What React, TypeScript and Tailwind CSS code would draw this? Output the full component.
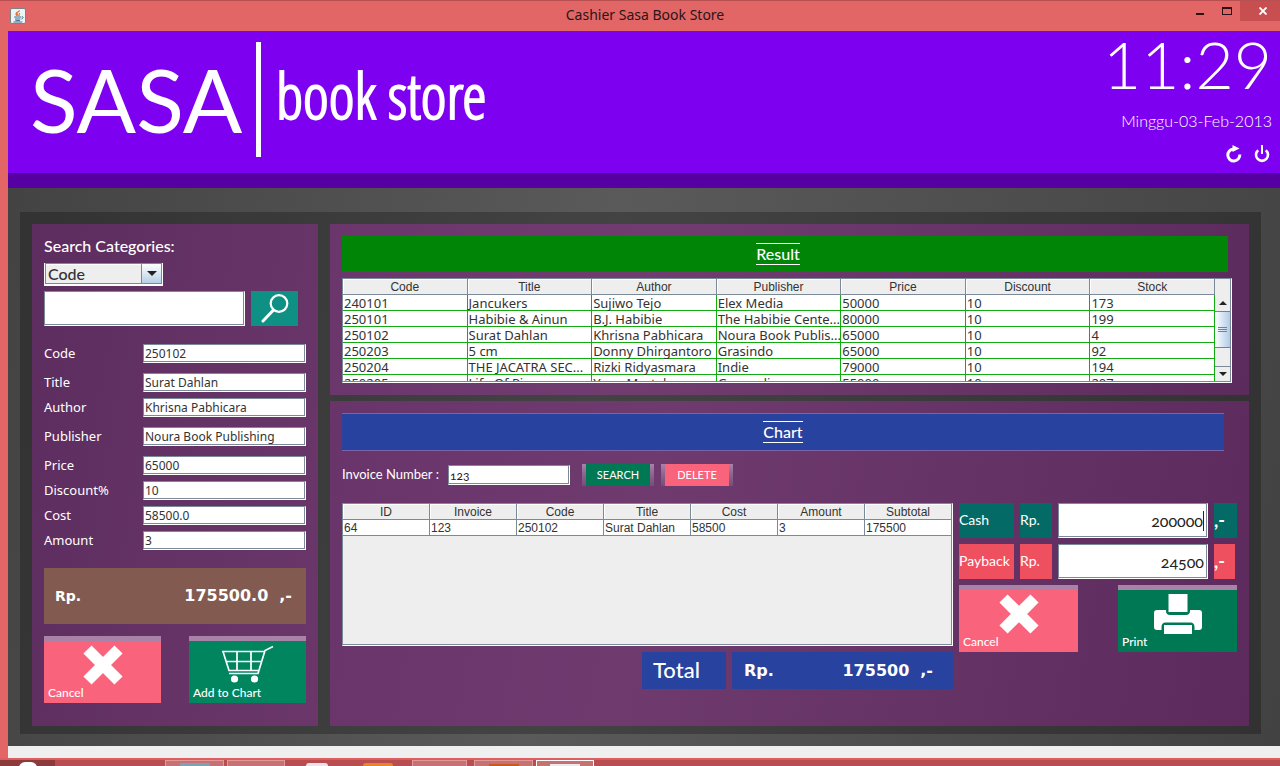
import React from "react";

const metalEdge =
  "border border-t-[#7a8a99] border-l-[#7a8a99] border-r-white border-b-white shadow-[inset_-1px_-1px_0_#7a8a99]";
const lato = "font-['Lato',sans-serif]";
const noto = "font-['Noto_Sans',sans-serif]";
const arial = "font-['Liberation_Sans',Arial,sans-serif]";
const verdana = "font-['DejaVu_Sans',sans-serif]";

function JavaIcon() {
  return (
    <svg width="16" height="16" viewBox="0 0 16 16" aria-hidden="true">
      <rect x="0.5" y="0.5" width="15" height="15" rx="1.5" fill="#eef3f4" stroke="#7b8388" />
      <path d="M9.8 2.5C6.5 4.6 6.6 5.4 8.2 7.8M7 4.2C5.2 6 6 6.8 7 7.8M10 5.2C8.6 6.2 9.3 6.8 9 8" fill="none" stroke="#e8722c" strokeWidth="1.1" />
      <path d="M4.2 9h7.2M5 11h5.4M5.4 12.6h4.6M3.4 14h9M12 8.6c1.8 0 1.4 2-.6 2.4" fill="none" stroke="#3d6c93" strokeWidth="1" />
    </svg>
  );
}

function CrossIcon() {
  return (
    <svg width="40" height="40" viewBox="0 0 40 40" aria-hidden="true">
      <path d="M4.500 4.500L35.500 35.500M35.500 4.500L4.500 35.500" stroke="#fff" strokeWidth="11.500" />
    </svg>
  );
}

function CartIcon() {
  return (
    <svg width="52" height="40" viewBox="0 0 52 40" fill="none" stroke="#fff" aria-hidden="true">
      <path d="M51 1.500L43 5.500L36 28.500H7M43 6.500H1L7 25.500H36.500M4 16.500H40M15 6.500V26M29 6.500V26" strokeWidth="1.700" />
      <circle cx="12.500" cy="34" r="3.600" fill="#fff" stroke="none" />
      <circle cx="32.500" cy="34" r="3.600" fill="#fff" stroke="none" />
    </svg>
  );
}

function PrintIcon() {
  return (
    <svg width="48" height="40" viewBox="0 0 48 40" fill="#fff" aria-hidden="true">
      <path d="M14.500 0H33.500V18H14.500Z" />
      <path d="M3 16H12V17C12 19.500 13.500 21 16 21H32C34.500 21 36 19.500 36 17V16H45C47 16 48 17 48 19V33C48 35 47 36 45 36H40.500V33C40.500 30 39 28.500 36.500 28.500H11.500C9 28.500 7.500 30 7.500 33V36H3C1 36 0 35 0 33V19C0 17 1 16 3 16Z" />
      <path d="M10 31H38V40H10Z" />
    </svg>
  );
}

function SearchIcon() {
  return (
    <svg width="28" height="29" viewBox="0 0 28 29" fill="none" stroke="#fff" aria-hidden="true">
      <circle cx="18" cy="9.500" r="8.300" strokeWidth="2.200" />
      <path d="M12.500 16L2 27" strokeWidth="3" strokeLinecap="round" />
    </svg>
  );
}

function RefreshIcon() {
  return (
    <svg width="16" height="18" viewBox="0 0 16 18" aria-hidden="true">
      <path d="M7.500 4A6 6 0 1 0 13.800 9.500" fill="none" stroke="#fff" strokeWidth="3" />
      <path d="M6.500 0L13.500 3.500L6.500 7Z" fill="#fff" />
    </svg>
  );
}

function PowerIcon() {
  return (
    <svg width="16" height="18" viewBox="0 0 16 18" fill="none" stroke="#fff" aria-hidden="true">
      <path d="M4.200 5.200A6 6 0 1 0 11.800 5.200" strokeWidth="2.600" />
      <path d="M8 0V9" strokeWidth="2" />
    </svg>
  );
}

function TitleBar() {
  return (
    <div className="flex h-[31px] border-t border-[#b84f50] bg-[#e26666]">
      <div className="w-[104px] pt-[7px] pl-[10px]">
        <JavaIcon />
      </div>
      <h1 className={`flex-1 pt-1 text-center text-sm text-[#2a1517] ${noto}`}>Cashier Sasa Book Store</h1>
      <div className="flex h-[20px]">
        <button aria-label="Minimize" className="flex w-[27px] items-end justify-center pb-[6px]">
          <span className="h-[2px] w-[8px] bg-[#2c1214]" />
        </button>
        <button aria-label="Maximize" className="flex w-[27px] items-center justify-center">
          <span className="h-[8px] w-[10px] border border-t-2 border-[#2c1214]" />
        </button>
        <button aria-label="Close" className="flex w-[40px] items-center justify-center bg-[#c74f50] pl-[6px]">
          <svg width="8" height="8" viewBox="0 0 8 8" aria-hidden="true">
            <path d="M0.500 0.500L7.500 7.500M7.500 0.500L0.500 7.500" stroke="#fff" strokeWidth="1.900" />
          </svg>
        </button>
      </div>
    </div>
  );
}

function Header() {
  return (
    <header className="flex h-[157px] justify-between border-b-[15px] border-[#5600a3] bg-[#7e00f1] text-white">
      <div className="flex items-start pt-[11px] pl-[22px]">
        <span className={`w-[226px] text-[88px] leading-[115px] whitespace-nowrap ${lato}`}>SASA</span>
        <span className="h-[115px] w-[5px] bg-white" />
        <span className="pl-[15px] font-['Open_Sans_Condensed_Light','Open_Sans_Condensed',sans-serif] text-[62px] leading-[107px] whitespace-nowrap [-webkit-text-stroke:2px_#fff]">
          book store
        </span>
      </div>
      <div className={`flex flex-col items-end pr-2 ${lato}`}>
        <time className="text-[66px] leading-[66px] font-light">11:29</time>
        <span className="text-base leading-[48px] font-light">Minggu-03-Feb-2013</span>
        <div className="flex gap-3 pr-[2px]">
          <button aria-label="Refresh"><RefreshIcon /></button>
          <button aria-label="Log out"><PowerIcon /></button>
        </div>
      </div>
    </header>
  );
}

const fields = [
  { id: "code", label: "Code", value: "250102", gap: "" },
  { id: "title", label: "Title", value: "Surat Dahlan", gap: "mt-[10px]" },
  { id: "author", label: "Author", value: "Khrisna Pabhicara", gap: "mt-[6px]" },
  { id: "publisher", label: "Publisher", value: "Noura Book Publishing", gap: "mt-[10px]" },
  { id: "price", label: "Price", value: "65000", gap: "mt-[10px]" },
  { id: "discount", label: "Discount%", value: "10", gap: "mt-[6px]" },
  { id: "cost", label: "Cost", value: "58500.0", gap: "mt-[6px]" },
  { id: "amount", label: "Amount", value: "3", gap: "mt-[6px]" },
];

function TileButton({ label, color, children }: { label: string; color: string; children: React.ReactNode }) {
  return (
    <button className={`flex h-[67px] flex-col border-t-[5px] border-[#a883a7] pt-1 text-white ${color}`}>
      <span className="self-center">{children}</span>
      <span className={`self-start pl-1 text-xs leading-4 font-medium ${lato}`}>{label}</span>
    </button>
  );
}

function SearchPanel() {
  return (
    <section className="w-[286px] bg-[linear-gradient(100deg,#5d2d5f,#6b376b)] p-3 text-white">
      <label htmlFor="category" className={`block text-base leading-5 font-medium ${lato}`}>Search Categories:</label>
      <div className="relative mt-[6px] h-[23px] w-[119px]">
        <select
          id="category"
          className={`h-full w-full appearance-none border-2 border-white bg-[#eee] pl-[2px] text-base leading-4 font-medium text-[#333] outline-none ${lato}`}
        >
          <option>Code</option>
          <option>Title</option>
          <option>Author</option>
        </select>
        <span className="pointer-events-none absolute inset-px border border-[#7a8a99]" />
        <span className="pointer-events-none absolute top-[2px] right-[2px] flex h-[19px] w-[20px] items-center justify-center border-l border-[#7a8a99] bg-linear-to-b from-white to-[#b8cfe5]">
          <svg width="10" height="5" viewBox="0 0 10 5" aria-hidden="true"><path d="M0 0H10L5 5Z" fill="#222" /></svg>
        </span>
      </div>
      <div className="mt-[6px] flex gap-[6px]">
        <input aria-label="Search term" className={`h-[35px] w-[201px] bg-white px-1 text-[#333] outline-none ${metalEdge}`} />
        <button aria-label="Search" className="flex h-[35px] w-[47px] items-center justify-center bg-[#0f9084]">
          <SearchIcon />
        </button>
      </div>
      <div className={`mt-[18px] ${noto}`}>
        {fields.map((f) => (
          <div key={f.id} className={`flex items-center justify-between ${f.gap}`}>
            <label htmlFor={f.id} className="text-[13px] leading-[19px]">{f.label}</label>
            <input id={f.id} defaultValue={f.value} className={`h-[19px] w-[163px] bg-white pl-px text-xs text-[#333] outline-none ${metalEdge}`} />
          </div>
        ))}
      </div>
      <div className={`mt-[18px] flex h-[56px] items-center bg-[#835a50] pr-[14px] pl-[11px] font-bold ${verdana}`}>
        <span className="flex-1 text-sm">Rp.</span>
        <output className="text-base">175500.0</output>
        <span className="pl-[11px] text-base">,-</span>
      </div>
      <div className="mt-3 grid grid-cols-2 gap-7">
        <TileButton label="Cancel" color="bg-[#fa637c]"><CrossIcon /></TileButton>
        <TileButton label="Add to Chart" color="bg-[#00855f]"><CartIcon /></TileButton>
      </div>
    </section>
  );
}

const resultHeads = ["Code", "Title", "Author", "Publisher", "Price", "Discount", "Stock"];
const results = [
  ["240101", "Jancukers", "Sujiwo Tejo", "Elex Media", "50000", "10", "173"],
  ["250101", "Habibie & Ainun", "B.J. Habibie", "The Habibie Cente...", "80000", "10", "199"],
  ["250102", "Surat Dahlan", "Khrisna Pabhicara", "Noura Book Publis...", "65000", "10", "4"],
  ["250203", "5 cm", "Donny Dhirgantoro", "Grasindo", "65000", "10", "92"],
  ["250204", "THE JACATRA SEC...", "Rizki Ridyasmara", "Indie", "79000", "10", "194"],
  ["250205", "Life Of Pi", "Yann Martel", "Gramedia", "55000", "10", "207"],
];

const headCell = "h-4 border-r border-b border-[#7a8a99] bg-[#eee] p-0 pt-[2px] text-xs leading-[13px] font-normal shadow-[inset_1px_1px_0_#fff]";
const bodyCell = "h-4 border-r border-b p-0 pt-[2px] pl-px leading-[13px] whitespace-nowrap";

function Banner({ title, color }: { title: string; color: string }) {
  return (
    <div className={`flex items-center justify-center ${color}`}>
      <h2 className={`border-y border-white text-base leading-5 font-medium text-white ${lato}`}>{title}</h2>
    </div>
  );
}

function ResultPanel() {
  return (
    <section className="h-[171px] bg-[linear-gradient(100deg,#6b366b,#713d71_35%,#5c2b5d)] py-3 pr-[17px] pl-3">
      <Banner title="Result" color="h-[36px] bg-[#008507] mr-1 pr-[14px]" />
      <div className="mt-[6px] flex h-[105px] border border-t-[#7a8a99] border-l-[#7a8a99] border-r-white border-b-white bg-white text-[#333]">
        <div className="flex-1 overflow-hidden border-b border-[#7a8a99]">
          <table className="w-full table-fixed border-separate border-spacing-0">
            <thead className={arial}>
              <tr>{resultHeads.map((h) => <th key={h} className={headCell}>{h}</th>)}</tr>
            </thead>
            <tbody className={`text-[13px] ${noto}`}>
              {results.map((r) => (
                <tr key={r[0]}>
                  {r.map((c, i) => (
                    <td key={i} className={`border-[#12ac12] ${bodyCell}`}>{c}</td>
                  ))}
                </tr>
              ))}
            </tbody>
          </table>
        </div>
        <div className="flex w-[16px] flex-col border-r border-[#7a8a99] bg-[#eee]" aria-hidden="true">
          <div className="h-4" />
          <div className="flex h-4 items-center justify-center">
            <svg width="8" height="4" viewBox="0 0 8 4"><path d="M0 4L4 0L8 4Z" fill="#222" /></svg>
          </div>
          <div className="flex h-[37px] flex-col items-center justify-center gap-px border-y border-[#6382bf] bg-linear-to-r from-white to-[#b0cbe8]">
            <span className="h-px w-[9px] bg-[#6382bf]" />
            <span className="h-px w-[9px] bg-[#6382bf]" />
            <span className="h-px w-[9px] bg-[#6382bf]" />
          </div>
          <div className="flex-1" />
          <div className="flex h-4 items-center justify-center border-y border-[#7a8a99]">
            <svg width="8" height="4" viewBox="0 0 8 4"><path d="M0 0L4 4L8 0Z" fill="#222" /></svg>
          </div>
        </div>
      </div>
    </section>
  );
}

const chartHeads = ["ID", "Invoice", "Code", "Title", "Cost", "Amount", "Subtotal"];
const chartRow = ["64", "123", "250102", "Surat Dahlan", "58500", "3", "175500"];

function SmallButton({ label, color }: { label: string; color: string }) {
  return (
    <button className="flex h-[22px] w-[72px] bg-linear-to-b from-[#a883a7] via-[#8d628e] to-[#7a4b7b] px-1">
      <span className={`flex-1 text-[11px] leading-[22px] text-white ${color} ${lato}`}>{label}</span>
    </button>
  );
}

function MoneyRow({ id, label, value, color, end, caret }: { id: string; label: string; value: string; color: string; end: string; caret?: boolean }) {
  return (
    <div className={`flex h-[35px] gap-[6px] text-white ${lato}`}>
      <label htmlFor={id} className={`w-[55px] text-sm leading-[34px] ${color}`}>{label}</label>
      <span className={`w-[32px] text-sm leading-[34px] ${color}`}>Rp.</span>
      <div className={`flex w-[150px] items-center bg-white pr-[3px] ${metalEdge}`}>
        <input id={id} defaultValue={value} className="w-full min-w-0 bg-transparent text-right text-base text-[#222] oldstyle-nums outline-none" />
        {caret && <span className="h-[20px] w-px bg-[#222]" />}
      </div>
      <span className={`text-lg leading-[34px] font-bold ${end} ${color}`}>,-</span>
    </div>
  );
}

function ChartPanel() {
  return (
    <section className="flex-1 bg-[linear-gradient(100deg,#69346a,#6f3b6f_35%,#5c2a5d)] p-3">
      <Banner title="Chart" color="h-[38px] mr-[13px] border-y border-[#7a63a8] bg-[#2842a0]" />
      <div className="mt-[13px] flex h-[22px] items-center">
        <label htmlFor="invoice" className={`w-[106px] text-[13px] text-white ${lato}`}>Invoice Number :</label>
        <input id="invoice" defaultValue="123" className={`h-[20px] w-[122px] bg-white pl-px text-xs text-[#222] oldstyle-nums outline-none ${metalEdge} ${lato}`} />
        <div className="ml-3 flex gap-[7px]">
          <SmallButton label="SEARCH" color="bg-[#007853]" />
          <SmallButton label="DELETE" color="bg-[#fa637c]" />
        </div>
      </div>
      <div className="mt-[17px] flex gap-[6px]">
        <div className="flex-1">
          <div className={`h-[143px] bg-[#eee] text-[#333] ${metalEdge}`}>
            <table className={`w-full table-fixed border-separate border-spacing-0 ${arial}`}>
              <thead>
                <tr>{chartHeads.map((h) => <th key={h} className={headCell}>{h}</th>)}</tr>
              </thead>
              <tbody>
                <tr>
                  {chartRow.map((c, i) => (
                    <td key={i} className={`border-[#7a8a99] bg-white text-xs ${bodyCell}`}>{c}</td>
                  ))}
                </tr>
              </tbody>
            </table>
          </div>
          <div className="mt-[6px] flex h-[37px] justify-end gap-[6px] text-white">
            <span className={`w-[84px] bg-[#2842a0] pl-[11px] text-[22px] leading-[36px] font-medium ${lato}`}>Total</span>
            <div className={`flex w-[221px] items-center bg-[#2842a0] pr-[20px] pl-3 text-base font-bold ${verdana}`}>
              <span className="flex-1">Rp.</span>
              <output>175500</output>
              <span className="pl-[11px]">,-</span>
            </div>
          </div>
        </div>
        <div className="flex w-[278px] flex-col gap-[6px]">
          <MoneyRow id="cash" label="Cash" value="200000" color="bg-[#046a66]" end="w-[23px]" caret />
          <MoneyRow id="payback" label="Payback" value="24500" color="bg-[#ef505f]" end="w-[21px]" />
          <div className="grid grid-cols-2 gap-10">
            <TileButton label="Cancel" color="bg-[#fa637c]"><CrossIcon /></TileButton>
            <TileButton label="Print" color="bg-[#007853]"><PrintIcon /></TileButton>
          </div>
        </div>
      </div>
    </section>
  );
}

function Taskbar() {
  const item = "h-full border-x border-t border-[#e09a9a] bg-[#c77272] flex justify-center";
  return (
    <div className="flex h-[6px] overflow-hidden bg-[#b94e50]" aria-hidden="true">
      <div className="flex w-[55px] justify-center bg-[#8a3c3d]">
        <span className="mt-[2px] h-[12px] w-[18px] rounded-full bg-white" />
      </div>
      <div className="ml-[110px] flex w-[430px]">
        <div className={`${item} w-[59px]`}><span className="mt-[2px] w-[30px] bg-[#7ba3b5]" /></div>
        <div className={`${item} ml-[3px] w-[58px]`} />
        <span className="mt-[3px] ml-[21px] w-[22px] rounded-t bg-[#e8e4ea]" />
        <span className="mt-[3px] ml-[35px] w-[30px] rounded-t-full bg-[#e8852a]" />
        <div className={`${item} ml-[19px] w-[55px]`} />
        <div className={`${item} ml-[7px] w-[59px]`}><span className="mt-[3px] w-[30px] bg-[#c85a1c]" /></div>
        <div className={`${item} ml-[3px] w-[58px] border-white`}><span className="mt-[3px] w-[30px] bg-[#eceaf0]" /></div>
      </div>
    </div>
  );
}

export default function App() {
  return (
    <div className="flex min-h-screen flex-col bg-[#e26666]">
      <TitleBar />
      <div className="flex flex-1 flex-col pl-2">
        <Header />
        <main className="flex flex-1 flex-col bg-[linear-gradient(100deg,#434344,#5a5a5b_45%,#424243)] pt-6 pr-[19px] pb-3 pl-3">
          <div className="flex flex-1 gap-3 bg-black/25 px-3 pt-3 pb-2">
            <SearchPanel />
            <div className="flex min-w-0 flex-1 flex-col gap-[6px]">
              <ResultPanel />
              <ChartPanel />
            </div>
          </div>
        </main>
        <div className="h-3 bg-[#efeff0]" />
      </div>
      <div className="h-[2px] bg-[#dd5d60]" />
      <Taskbar />
    </div>
  );
}
